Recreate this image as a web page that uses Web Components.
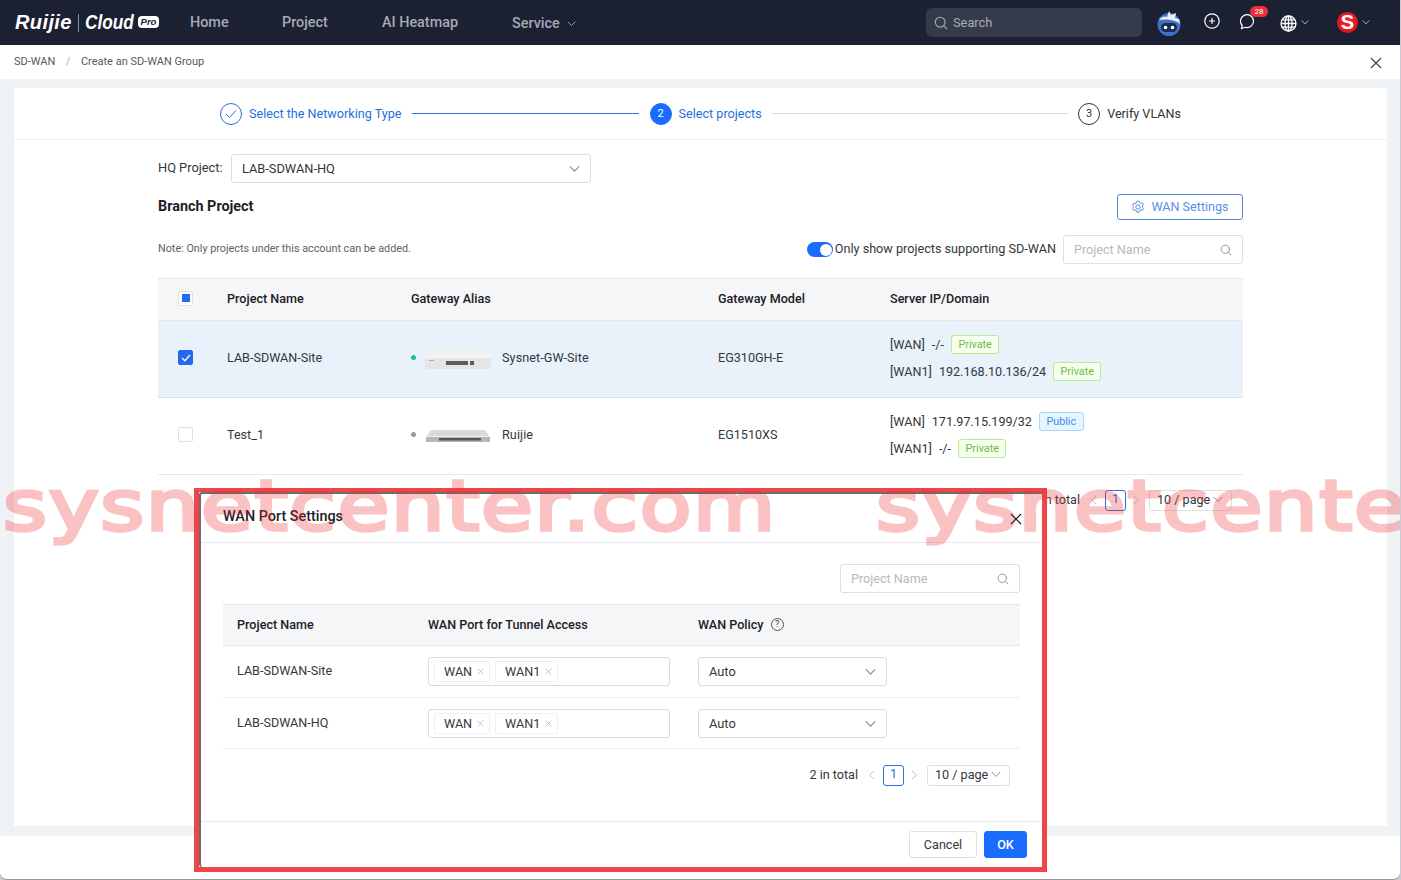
<!DOCTYPE html>
<html lang="en">
<head>
<meta charset="utf-8">
<title>Create an SD-WAN Group</title>
<style>
html,body{margin:0;height:880px;overflow:hidden;background:#c8ccd2;font-family:Roboto,"Liberation Sans",sans-serif;font-size:12.6px;color:#33373d}
</style>
</head>
<body>
<app-page>
  <top-nav slot="nav"></top-nav>
  <crumb-bar slot="crumbs"></crumb-bar>
  <main-card>
    <step-bar></step-bar>
    <hq-row></hq-row>
    <branch-head></branch-head>
    <filter-row></filter-row>
    <gw-table>
      <gw-row name="LAB-SDWAN-Site" alias="Sysnet-GW-Site" model="EG310GH-E" status="on" device="box" selected>
        <wan-line port="[WAN]" value="-/-" kind="Private"></wan-line>
        <wan-line port="[WAN1]" value="192.168.10.136/24" kind="Private"></wan-line>
      </gw-row>
      <gw-row name="Test_1" alias="Ruijie" model="EG1510XS" status="off" device="rack">
        <wan-line port="[WAN]" value="171.97.15.199/32" kind="Public"></wan-line>
        <wan-line port="[WAN1]" value="-/-" kind="Private"></wan-line>
      </gw-row>
    </gw-table>
    <page-bar total="2 in total" style="margin:14px 155px 0 0"></page-bar>
  </main-card>
  <wan-dialog slot="overlay">
    <search-box style="width:180px;margin:21px 0 11px auto"></search-box>
    <dp-table>
      <dp-row name="LAB-SDWAN-Site"></dp-row>
      <dp-row name="LAB-SDWAN-HQ" style="height:50px"></dp-row>
    </dp-table>
    <page-bar total="2 in total" style="margin:15px 10px 0 0"></page-bar>
  </wan-dialog>
  <water-mark slot="overlay"></water-mark>
</app-page>

<script>
const I = {
  search:(s=14,c='#9a9ea6')=>`<svg width="${s}" height="${s}" viewBox="0 0 14 14" fill="none" stroke="${c}" stroke-width="1.1" stroke-linecap="round"><circle cx="6.2" cy="6.2" r="4.9"/><path d="M9.8 9.8l3 3"/></svg>`,
  chev:(w=10,c='#8a8e96')=>`<svg width="${w}" height="${w}" viewBox="0 0 10 10" fill="none" stroke="${c}" stroke-width="1"><path d="M.8 3l4.2 4.4L9.2 3"/></svg>`,
  x:(s=12,c='#333',sw=1.2)=>`<svg width="${s}" height="${s}" viewBox="0 0 12 12" fill="none" stroke="${c}" stroke-width="${sw}"><path d="M1 1l10 10M11 1L1 11"/></svg>`
};
function def(name, css, html){
  customElements.define(name, class extends HTMLElement{
    connectedCallback(){
      if(this.shadowRoot) return;
      const r=this.attachShadow({mode:'open'});
      r.innerHTML=`<style>${css}</style>`+html(this);
    }
  });
}
const at=(e,n)=>e.getAttribute(n)||'';

def('app-page',`
  :host{display:flex;flex-direction:column;position:relative;width:1400px;height:880px;box-sizing:border-box;background:#fff;border-bottom:1px solid #9a9a9a;border-radius:0 0 7px 7px;overflow:hidden}
  .content{background:#eff3f6;padding:9px 13px 10px 14px;height:757px;box-sizing:border-box;display:flex;flex:none}
`,()=>`<slot name="nav"></slot><slot name="crumbs"></slot><div class="content"><slot></slot></div><slot name="overlay"></slot>`);

def('top-nav',`
  :host{display:flex;align-items:center;height:45px;background:#1b2032;color:#a7aab2;flex:none;font-weight:500;font-size:14.4px}
  .logo{display:flex;align-items:center;width:190px;box-sizing:border-box;padding-left:15px;color:#fff;font-style:italic;font-weight:700}
  .rj{font-family:"Liberation Sans",sans-serif;font-size:20px;letter-spacing:.4px;width:59px;white-space:nowrap;margin-top:-1px}
  .sep{width:1px;height:18px;background:#8a8d97;margin:0 6px 0 4px}
  .cl{font-family:"Liberation Sans",sans-serif;font-size:20px;width:53px;display:inline-block;transform:scaleX(.86);transform-origin:0 50%;margin-top:-1px}
  .pro{background:#fff;color:#1b2032;font-size:9.500px;line-height:12px;width:21px;text-align:center;border-radius:4px;margin-top:-1px;font-family:"Liberation Sans",sans-serif}
  a{display:block;white-space:nowrap;margin-top:-1px}
  .svc{display:flex;align-items:center;gap:7px;margin-top:1px}
  .search{margin-left:auto;width:216px;height:29px;box-sizing:border-box;background:#363b4c;border-radius:6px;display:flex;align-items:center;gap:5px;padding-left:8px;font-weight:400;font-size:12.8px;color:#a9acb4}
  .right{display:flex;align-items:center;height:45px;width:258px;position:relative;flex:none}
  .right>*{position:absolute}
  .badge{left:108px;top:6px;width:18px;height:11px;line-height:11px;border-radius:6px;background:#e8303a;color:#fff;font-size:8px;font-weight:400;text-align:center}
  .s{left:195px;top:12px;width:21px;height:21px;border-radius:50%;background:radial-gradient(circle at 50% 40%,#f4262c,#d70c14);color:#fff;font:700 20px/21px "Liberation Sans",sans-serif;text-align:center}
`,()=>`
  <div class="logo"><span class="rj">Ruijie</span><span class="sep"></span><span class="cl">Cloud</span><span class="pro">Pro</span></div>
  <a style="width:92px">Home</a><a style="width:100px">Project</a><a style="width:130px">AI Heatmap</a>
  <a class="svc">Service ${I.chev(9,'#a7aab2')}</a>
  <div class="search">${I.search(14,'#a9acb4')}<span>Search</span></div>
  <div class="right">
    <svg style="left:13px;top:10px" width="28" height="26" viewBox="0 0 28 26"><circle cx="14" cy="14.5" r="11.5" fill="#3f72c4"/><path d="M4 10C7 6 10 6 12 7L14 1l2 4 5-2-1 5 4 1 1 5C19 9 10 9 4 10z" fill="#e6edf8"/><rect x="6" y="13" width="16" height="9" rx="4.5" fill="#1c2b56"/><circle cx="10.5" cy="17.5" r="1.8" fill="#fff"/><circle cx="17.5" cy="17.5" r="1.8" fill="#fff"/></svg>
    <svg style="left:62px;top:13px" width="16" height="16" viewBox="0 0 16 16" fill="none" stroke="#fff" stroke-width="1.2"><circle cx="8" cy="8" r="7.2"/><path d="M8 5v6M5 8h6"/></svg>
    <svg style="left:97px;top:14px" width="17" height="16" viewBox="0 0 17 16" fill="none" stroke="#fff" stroke-width="1.2"><path d="M3.2 11.500L2.500 14.500 6 13.300A6.500 6.500 0 1 0 3.200 11.500z"/></svg>
    <span class="badge">28</span>
    <svg style="left:138px;top:15px" width="17" height="17" viewBox="0 0 17 17" fill="none" stroke="#fff" stroke-width="1.3"><circle cx="8.500" cy="8.500" r="7.500"/><ellipse cx="8.500" cy="8.500" rx="3.500" ry="7.500"/><path d="M1 8.500h15M2 4.800h13M2 12.200h13M8.500 1v15"/></svg>
    <span style="left:159px;top:18px;line-height:0">${I.chev(8,'#cfd1d6')}</span>
    <span class="s">S</span>
    <span style="left:220px;top:18px;line-height:0">${I.chev(8,'#cfd1d6')}</span>
  </div>`);

def('crumb-bar',`
  :host{display:flex;align-items:center;height:34px;background:#fff;flex:none;padding:0 18px 0 14px;font-size:11px;color:#555a61}
  span{margin-top:-2px}
  i{font-style:normal;color:#a9acb2;margin:-2px 10.500px 0}
  svg{margin-left:auto;margin-top:1px}
`,()=>`<span>SD-WAN</span><i>/</i><span>Create an SD-WAN Group</span>${I.x(12,'#444',1.2)}`);

def('main-card',`
  :host{display:flex;flex-direction:column;flex:1;background:#fff}
`,()=>`<slot></slot>`);

def('step-bar',`
  :host{display:flex;align-items:center;height:51px;padding:0 206px;border-bottom:1px solid #eeeff1;flex:none;font-size:12.6px;color:#333}
  .c{width:20px;height:20px;border-radius:50%;border:1px solid #2b6fd8;display:grid;place-items:center;flex:none;font-size:11px}
  .t{margin-left:7px;white-space:nowrap;color:#1f6fe0}
  .on{background:#1a6cff;color:#fff;border-color:#1a6cff}
  .l{height:1px;margin:0 10.500px;background:#2b6fd8}
  .g{border-color:#333;color:#333}
`,()=>`
  <span class="c"><svg width="12" height="10" viewBox="0 0 12 10" fill="none" stroke="#2b6fd8" stroke-width="1"><path d="M1 5l3.500 3.500L11 1.500"/></svg></span><span class="t">Select the Networking Type</span>
  <span class="l" style="flex:226"></span>
  <span class="c on">2</span><span class="t">Select projects</span>
  <span class="l" style="flex:294;background:#d6d8dc"></span>
  <span class="c g">3</span><span class="t" style="color:#333">Verify VLANs</span>`);

def('sel-box',`
  :host{display:flex;align-items:center;justify-content:space-between;height:29px;box-sizing:border-box;border:1px solid #d9dce1;border-radius:3px;padding:0 10px;background:#fff;font-size:12.8px;color:#33373d}
`,e=>`<span>${at(e,'value')}</span>${I.chev(11,'#888c93')}`);

def('hq-row',`
  :host{display:flex;align-items:center;margin:14px 144px 0;height:29px;flex:none;font-size:12.8px;color:#33373d}
  span{width:73px;white-space:nowrap;margin-top:-2px}
  sel-box{width:360px}
`,()=>`<span>HQ Project:</span><sel-box value="LAB-SDWAN-HQ"></sel-box>`);

def('branch-head',`
  :host{display:flex;align-items:center;justify-content:space-between;margin:11px 144px 0;height:26px;flex:none}
  b{font-size:14.4px;font-weight:700;color:#1d2025;margin-top:-2px}
  button{all:unset;box-sizing:border-box;width:126px;height:26px;padding-bottom:1px;border:1px solid #4e86dd;border-radius:3px;display:flex;align-items:center;justify-content:center;gap:6px;color:#5a8fe6;font:12.6px Roboto,sans-serif}
`,()=>`<b>Branch Project</b><button><svg width="14" height="14" viewBox="0 0 14 14" fill="none" stroke="#5a8fe6" stroke-width="1"><path d="M7 1l1.200.1.500 1.500 1.300.7 1.500-.4 1.100 1.900-1.100 1.100v1.400l1.100 1.100-1.100 1.900-1.500-.4-1.300.7-.5 1.500H5.800l-.5-1.500-1.300-.7-1.500.4-1.100-1.900 1.100-1.100V6.400L1.400 5.300l1.100-1.900 1.500.4 1.300-.7.5-1.500z"/><circle cx="7" cy="7" r="2.200"/></svg>WAN Settings</button>`);

def('search-box',`
  :host{display:flex;align-items:center;justify-content:space-between;height:29px;box-sizing:border-box;border:1px solid #dcdfe3;border-radius:3px;padding:0 10px;background:#fff;color:#b6b9c0;font-size:12.6px;flex:none}
  span{margin-top:-1px}
`,()=>`<span>Project Name</span>${I.search(12,'#8f939a')}`);

def('filter-row',`
  :host{display:flex;align-items:center;margin:15px 144px 0;height:29px;flex:none}
  .n{font-size:10.8px;color:#5d6167;margin-right:auto;margin-top:-2px}
  .tg{width:26px;height:15px;border-radius:8px;background:#1a6cff;position:relative;margin-right:2px}
  .tg::after{content:"";position:absolute;right:1px;top:1.500px;width:12px;height:12px;border-radius:50%;background:#fff}
  .lb{font-size:12.65px;color:#33373d;margin:-2px 7px 0 0;white-space:nowrap}
  search-box{width:180px}
`,()=>`<span class="n">Note: Only projects under this account can be added.</span><span class="tg"></span><span class="lb">Only show projects supporting SD-WAN</span><search-box></search-box>`);

const GW='grid-template-columns:69px 184px 307px 172px 1fr';
def('check-box',`
  :host{display:block;width:15px;height:15px;box-sizing:border-box;border:1px solid #dcdfe3;border-radius:2px;background:#fff;position:relative}
  :host([state=on]){background:#2468f2;border-color:#2468f2}
  :host([state=mix])::after{content:"";position:absolute;left:2.500px;top:2.500px;width:8px;height:8px;background:#2468f2}
  svg{position:absolute;left:2px;top:3px}
`,e=>at(e,'state')==='on'?`<svg width="10" height="8" viewBox="0 0 10 8" fill="none" stroke="#fff" stroke-width="1.300"><path d="M1 4l2.800 2.800L9 1"/></svg>`:'');

def('gw-table',`
  :host{display:block;margin:14px 144px 0;flex:none}
  .h{display:grid;${GW};align-items:center;box-sizing:border-box;height:43px;padding-bottom:3px;background:#f5f6f8;border-top:1px solid #e6e8eb;border-bottom:1px solid #e3e6ea;font-weight:500;color:#1d2025;font-size:12.6px}
  check-box{margin-left:20px}
`,()=>`<div class="h"><check-box state="mix" style="width:15px"></check-box><span>Project Name</span><span>Gateway Alias</span><span>Gateway Model</span><span>Server IP/Domain</span></div><slot></slot>`);

const DEV={
 box:`<svg width="66" height="22" viewBox="0 0 66 22"><path d="M6 1h54l6 8v12H0V9z" fill="#e4e5e6"/><path d="M0 9l6-8h54l6 8z" fill="#f1f1f1"/><rect x="0" y="9" width="66" height="1" fill="#f8f8f8"/><rect x="21" y="13" width="22" height="4" fill="#5a5c60"/><rect x="45" y="13" width="4" height="4" fill="#5a5c60"/><rect x="4" y="12" width="5" height="1" fill="#aaa"/></svg>`,
 rack:`<svg width="66" height="14" viewBox="0 0 66 14"><path d="M6 1h54l4 6H2z" fill="#d9dadb"/><rect x="1" y="7" width="64" height="6" fill="#b4b6b8"/><rect x="1" y="7" width="64" height="1" fill="#eee"/><rect x="14" y="9" width="42" height="2.500" fill="#55585c"/></svg>`
};
def('gw-row',`
  :host{display:grid;${GW};align-items:center;box-sizing:border-box;height:77px;padding-bottom:4px;border-bottom:1px solid #e6e8ec;background:#fff;font-size:12.6px;color:#33373d}
  :host([selected]){background:#e9f1fb;border-bottom-color:#dde3ec}
  check-box{margin-left:20px}
  .g{display:flex;align-items:center}
  .d{width:5px;height:5px;border-radius:50%;margin:1px 9px 0 0;background:#9a9a9a}
  .d.on{background:#19c48a}
  .g svg{display:block;flex:none}
  .g div{line-height:0;width:65px;margin:3px 12px 0 0}
  .a{letter-spacing:.1px}
  .w{padding-top:2px}
`,e=>`<check-box ${e.hasAttribute('selected')?'state="on"':''}></check-box><span>${at(e,'name')}</span>
  <div class="g"><span class="d ${at(e,'status')}"></span><div>${DEV[at(e,'device')]}</div><span class="a">${at(e,'alias')}</span></div>
  <span>${at(e,'model')}</span><div class="w"><slot></slot></div>`);

def('wan-line',`
  :host{display:flex;align-items:center;gap:7px;height:27px;font-size:12.6px;color:#33373d}
  i{font-style:normal;font-size:10.8px;height:19px;line-height:17px;box-sizing:border-box;padding:0 6.500px;border-radius:3px;border:1px solid #b7eb8f;background:#f6ffed;color:#6dbb45}
  i.Public{border-color:#a6d8f7;background:#e6f5ff;color:#3e8fe8}
`,e=>`<span>${at(e,'port')}</span><span>${at(e,'value')}</span><i class="${at(e,'kind')}">${at(e,'kind')}</i>`);

def('page-bar',`
  :host{display:flex;align-items:center;justify-content:flex-end;height:22px;flex:none;font-size:12.6px;color:#33373d}
  .n{width:21px;height:21px;box-sizing:border-box;border:1px solid #2b6fd8;border-radius:3px;color:#2b6fd8;text-align:center;line-height:15px;margin:0 7px 0 8px}
  .s{width:83px;height:21px;box-sizing:border-box;border:1px solid #dcdfe3;border-radius:3px;display:flex;align-items:center;gap:3px;padding:0 0 2px 7px;margin-left:9px;white-space:nowrap}
  span.t{margin:-2px 10px 0 0}
  svg{flex:none}
`,e=>`<span class="t">${at(e,'total')}</span>
  <svg width="7" height="10" viewBox="0 0 7 10" fill="none" stroke="#c3c6cb"><path d="M6 1L1.500 5 6 9"/></svg>
  <span class="n">1</span>
  <svg width="7" height="10" viewBox="0 0 7 10" fill="none" stroke="#c3c6cb"><path d="M1 1l4.500 4L1 9"/></svg>
  <span class="s">10 / page ${I.chev(10,'#8a8e96')}</span>`);

const DP='grid-template-columns:205px 270px 1fr';
def('dp-table',`
  :host{display:block;flex:none}
  .h{display:grid;${DP};align-items:center;box-sizing:border-box;height:42px;padding-bottom:2px;background:#f5f6f8;border-top:1px solid #e6e8eb;border-bottom:1px solid #e6e8eb;font-weight:500;color:#1d2025;font-size:12.6px}
  .a{padding-left:14px}
  .p{display:flex;align-items:center;gap:7px}
  .q{width:11px;height:11px;border:1px solid #555;border-radius:50%;font-size:9px;font-weight:400;line-height:11px;text-align:center;color:#444;flex:none}
`,()=>`<div class="h"><span class="a">Project Name</span><span>WAN Port for Tunnel Access</span><div class="p"><span>WAN Policy</span><span class="q">?</span></div></div><slot></slot>`);

def('wan-tag',`
  :host{display:flex;align-items:center;height:21px;box-sizing:border-box;border:1px solid #eef0f2;border-radius:2px;padding:0 5px 0 9px;gap:5px;font-size:12.6px;color:#33373d}
`,e=>`<span>${at(e,'label')}</span>${I.x(7,'#8d9096',.9)}`);

def('dp-row',`
  :host{display:grid;${DP};align-items:center;height:51px;border-bottom:1px solid #eceef0;font-size:12.6px;color:#33373d}
  span{padding:0 0 2px 14px}
  .ti{width:242px;height:29px;box-sizing:border-box;border:1px solid #d9dce1;border-radius:3px;display:flex;align-items:center;gap:5px;padding-left:5px}
  sel-box{width:189px}
`,e=>`<span>${at(e,'name')}</span><div class="ti"><wan-tag label="WAN"></wan-tag><wan-tag label="WAN1"></wan-tag></div><sel-box value="Auto"></sel-box>`);

def('wan-dialog',`
  :host{position:absolute;left:194px;top:488px;width:853px;height:384px;box-sizing:border-box;border:5px solid #ee4548;border-top-width:4px;background:#fff;display:flex;flex-direction:column}
  .in{flex:1;display:flex;flex-direction:column;border-left:2px solid #6c6c6c;border-top:2px solid #6c6c6c;border-radius:3px 0 0 3px;min-height:0}
  header{display:flex;align-items:center;justify-content:space-between;height:49px;flex:none;box-sizing:border-box;padding:0 20px 0 22px;border-bottom:1px solid #e8eaed;font-size:14.4px;font-weight:500;color:#1d2025}
  header span{margin-top:-3px}
  header svg{margin-top:1px}
  .body{flex:1;padding:0 22px;display:flex;flex-direction:column;min-height:0}
  footer{height:46px;flex:none;box-sizing:border-box;border-top:1px solid #e8eaed;padding:9px 15px 0 0;display:flex;justify-content:flex-end;gap:7px}
  button{all:unset;box-sizing:border-box;height:27px;border-radius:3px;text-align:center;font:12.6px/23px Roboto,sans-serif}
  .c{width:68px;border:1px solid #dcdfe3;color:#33373d}
  .o{width:43px;background:#1a6cff;border:1px solid #1a6cff;color:#fff;font-weight:500}
`,()=>`<div class="in"><header><span>WAN Port Settings</span>${I.x(12,'#111',1.2)}</header><div class="body"><slot></slot></div><footer><button class="c">Cancel</button><button class="o">OK</button></footer></div>`);

def('water-mark',`
  :host{position:absolute;left:0;top:456px;width:1400px;height:100px;overflow:hidden;pointer-events:none;display:flex;opacity:.29;color:#ef2f33;white-space:nowrap;font:400 70px/100px "DejaVu Sans",sans-serif;-webkit-text-stroke:3.500px #ef2f33;padding-left:3px;box-sizing:border-box}
  div{flex:none;width:873px}
  span{display:inline-block;transform:scaleX(1.205);transform-origin:0 50%;letter-spacing:1.400px}
`,()=>`<div><span>sysnetcenter.com</span></div><div><span>sysnetcenter.com</span></div>`);
</script>
</body>
</html>
